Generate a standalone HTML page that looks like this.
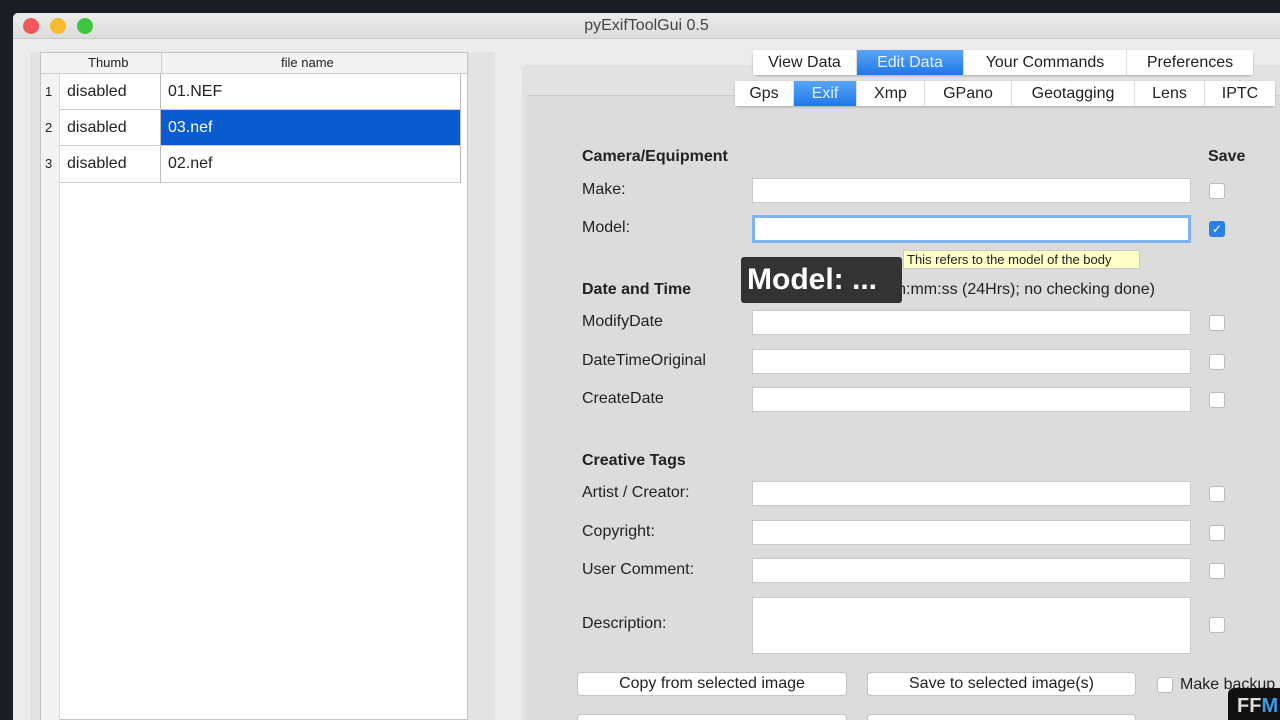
<!DOCTYPE html>
<html><head><style>
*{margin:0;padding:0;box-sizing:border-box}
html,body{width:1280px;height:720px;overflow:hidden}
body{background:#1a1d24;font-family:"Liberation Sans",sans-serif;position:relative;font-size:16px;color:#222}
.a{position:absolute}
.win{left:13px;top:13px;width:1267px;height:707px;background:#ececec;border-radius:5px 0 0 0}
.tb{left:13px;top:13px;width:1267px;height:26px;background:linear-gradient(#ececec,#dcdcdc);border-bottom:1px solid #c8c8c8;text-align:center;line-height:26px;font-size:16px;color:#444;border-radius:5px 0 0 0}
.dot{width:16px;height:16px;border-radius:50%;top:18px}
.cell{position:absolute;background:#fff;border-right:1px solid #bbb;border-bottom:1px solid #ccc;line-height:36px;padding-left:7px}
.inp{position:absolute;left:752px;width:439px;height:25px;background:#fff;border:1px solid #c9c9c9}
.lb{position:absolute;left:582px}
.cb{position:absolute;left:1209px;width:16px;height:16px;background:#fff;border:1px solid #bbb;border-radius:3px}
.h{position:absolute;left:582px;font-weight:bold}
.tab{position:absolute;top:0;height:25px;line-height:25px;text-align:center;background:#fff;border-right:1px solid #ddd;font-size:16px}
.btn{position:absolute;height:24px;background:#fff;border:1px solid #c4c4c4;border-radius:4px;text-align:center;line-height:22px;font-size:16px}
</style></head><body>
<div class="a win"></div>
<div class="a tb">pyExifToolGui 0.5</div>
<div class="a dot" style="left:23px;background:#f2585a"></div>
<div class="a dot" style="left:50px;background:#f6bc2f"></div>
<div class="a dot" style="left:77px;background:#3fc63f"></div>
<div class="a" style="left:30px;top:52px;width:465px;height:668px;background:#e3e3e3"></div>
<div class="a" style="left:40px;top:52px;width:428px;height:668px;background:#fff;border:1px solid #c4c4c4"></div>
<div class="a" style="left:41px;top:53px;width:426px;height:21px;background:#f3f3f3;border-bottom:1px solid #ccc;font-size:13px;line-height:20px">
<span class="a" style="left:47px">Thumb</span><span class="a" style="left:120px;top:0;width:1px;height:21px;background:#ccc"></span><span class="a" style="left:240px">file name</span></div>
<div class="a" style="left:41px;top:74px;width:19px;height:646px;background:#f3f3f3;border-right:1px solid #ddd"></div>
<div class="a" style="left:45px;top:74px;font-size:13px;line-height:36px">1<br>2<br>3</div>
<div class="cell" style="left:60px;top:74px;width:101px;height:36px">disabled</div>
<div class="cell" style="left:161px;top:74px;width:300px;height:36px">01.NEF</div>
<div class="cell" style="left:60px;top:110px;width:101px;height:36px">disabled</div>
<div class="cell" style="left:161px;top:110px;width:300px;height:36px;background:#0b5bd0;color:#fff">03.nef</div>
<div class="cell" style="left:60px;top:146px;width:101px;height:37px">disabled</div>
<div class="cell" style="left:161px;top:146px;width:300px;height:37px">02.nef</div>
<div class="a" style="left:522px;top:65px;width:758px;height:655px;background:#e2e2e2;border-radius:4px 0 0 0"></div>
<div class="a" style="left:527px;top:95px;width:753px;height:625px;background:#dcdcdc;border-top:1px solid #ccc"></div>
<div class="a" style="left:753px;top:50px;width:500px;height:25px;background:#fff;border-radius:4px;box-shadow:0 1px 2px #aaa">
<div class="tab" style="left:0;width:104px">View Data</div>
<div class="tab" style="left:104px;width:107px;background:linear-gradient(#5aa5f7,#1e78e8);color:#e8f2ff">Edit Data</div>
<div class="tab" style="left:211px;width:163px">Your Commands</div>
<div class="tab" style="left:374px;width:126px;border:0">Preferences</div></div>
<div class="a" style="left:735px;top:81px;width:540px;height:25px;background:#fff;border-radius:4px;box-shadow:0 1px 2px #aaa">
<div class="tab" style="left:0;width:59px">Gps</div>
<div class="tab" style="left:59px;width:63px;background:linear-gradient(#5aa5f7,#1e78e8);color:#e8f2ff">Exif</div>
<div class="tab" style="left:122px;width:68px">Xmp</div>
<div class="tab" style="left:190px;width:87px">GPano</div>
<div class="tab" style="left:277px;width:123px">Geotagging</div>
<div class="tab" style="left:400px;width:70px">Lens</div>
<div class="tab" style="left:470px;width:70px;border:0">IPTC</div></div>
<div class="h" style="top:148px">Camera/Equipment</div>
<div class="a" style="left:1208px;top:148px;font-weight:bold">Save</div>
<div class="lb" style="top:181px">Make:</div><div class="inp" style="top:178px"></div><div class="cb" style="top:183px"></div>
<div class="lb" style="top:219px">Model:</div><div class="inp" style="top:215px;height:28px;border:3px solid #7fb2ee"></div>
<div class="cb" style="top:221px;background:#2a7fe8;border-color:#2a7fe8;color:#fff;font-size:12px;line-height:14px;text-align:center">✓</div>
<div class="a" style="left:903px;top:250px;width:237px;height:19px;background:#ffffc8;border:1px solid #ccc;font-size:13px;line-height:17px;padding-left:3px">This refers to the model of the body</div>
<div class="h" style="top:281px">Date and Time</div>
<div class="a" style="left:752px;top:281px;width:403px;text-align:right;white-space:nowrap">YYYY:MM:DD hh:mm:ss (24Hrs); no checking done)</div>
<div class="a" style="left:741px;top:257px;width:161px;height:46px;background:#333;border-radius:3px;color:#fff;font-size:30px;font-weight:bold;line-height:46px;padding-left:6px">Model: ...</div>
<div class="lb" style="top:313px">ModifyDate</div><div class="inp" style="top:310px"></div><div class="cb" style="top:315px"></div>
<div class="lb" style="top:352px">DateTimeOriginal</div><div class="inp" style="top:349px"></div><div class="cb" style="top:354px"></div>
<div class="lb" style="top:390px">CreateDate</div><div class="inp" style="top:387px"></div><div class="cb" style="top:392px"></div>
<div class="h" style="top:452px">Creative Tags</div>
<div class="lb" style="top:484px">Artist / Creator:</div><div class="inp" style="top:481px"></div><div class="cb" style="top:486px"></div>
<div class="lb" style="top:523px">Copyright:</div><div class="inp" style="top:520px"></div><div class="cb" style="top:525px"></div>
<div class="lb" style="top:561px">User Comment:</div><div class="inp" style="top:558px"></div><div class="cb" style="top:563px"></div>
<div class="lb" style="top:615px">Description:</div><div class="inp" style="top:597px;height:57px"></div><div class="cb" style="top:617px"></div>
<div class="btn" style="left:577px;top:672px;width:270px">Copy from selected image</div>
<div class="btn" style="left:867px;top:672px;width:269px">Save to selected image(s)</div>
<div class="a" style="left:1157px;top:677px;width:16px;height:16px;background:#fff;border:1px solid #bbb;border-radius:3px"></div>
<div class="a" style="left:1180px;top:676px;white-space:nowrap">Make backup</div>
<div class="btn" style="left:577px;top:714px;width:270px;height:6px;border-bottom:0;border-radius:4px 4px 0 0"></div>
<div class="btn" style="left:867px;top:714px;width:269px;height:6px;border-bottom:0;border-radius:4px 4px 0 0"></div>
<div class="a" style="left:1228px;top:688px;width:52px;height:32px;background:#111;border-radius:6px 0 0 0;color:#ddd;font-weight:bold;font-size:20px;line-height:36px;padding-left:9px">FF<span style="color:#3a9be8">M</span></div>
</body></html>
